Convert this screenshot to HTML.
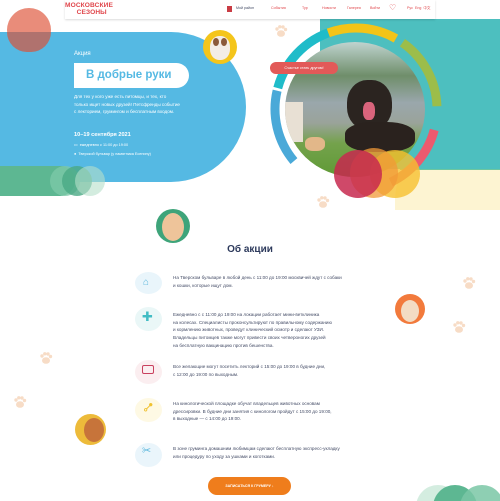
<!DOCTYPE html>
<html><head><meta charset="utf-8"><style>
*{margin:0;padding:0;box-sizing:border-box}
html,body{width:500px;height:501px;overflow:hidden}
body{background:#fff;font-family:"Liberation Sans","DejaVu Sans",sans-serif}
#w{position:relative;width:500px;height:501px;overflow:hidden}
.a{position:absolute}
.c{position:absolute;border-radius:50%}
.t{position:absolute;font-size:4.6px;color:#444c66;line-height:7.7px;white-space:nowrap}
.paw{position:absolute;width:14px;height:14px}
</style></head><body><div id="w">
<svg width="0" height="0" style="position:absolute"><defs><g id="pw" fill="#f7dcc6"><ellipse cx="7" cy="9.5" rx="4" ry="3.3"/><circle cx="3" cy="5" r="1.7"/><circle cx="5.8" cy="2.8" r="1.7"/><circle cx="9" cy="3" r="1.7"/><circle cx="11.5" cy="5.5" r="1.7"/></g></defs></svg>
<div class="a" style="left:395px;top:140px;width:105px;height:70px;background:#fdf4d2;border-radius:60px 0 0 0"></div>
<div class="a" style="left:400px;top:125px;width:100px;height:45px;background:#6cc6a0;border-radius:50px 0 0 0"></div>
<div class="a" style="left:320px;top:19px;width:180px;height:150px;background:#4dbfbf;border-radius:0 0 0 60px"></div>
<div class="a" style="left:0;top:32px;width:246px;height:150px;background:#55b9e3;border-radius:0 75px 75px 0"></div>
<div class="c" style="left:7px;top:8px;width:44px;height:44px;background:#e98c7a"></div>
<div class="a" style="left:7px;top:32px;width:44px;height:20px;background:#b0726e;border-radius:0 0 22px 22px"></div>
<div class="a" style="left:0;top:166px;width:75px;height:30px;background:#5db792;border-radius:0 15px 15px 0"></div>
<div class="c" style="left:50px;top:166px;width:30px;height:30px;background:#7cc8a8;opacity:.8"></div>
<div class="c" style="left:62px;top:166px;width:30px;height:30px;background:#4aa985;opacity:.8"></div>
<div class="c" style="left:75px;top:166px;width:30px;height:30px;background:#b5dfc9;opacity:.6"></div>
<div class="a" style="left:65px;top:0;width:370px;height:19px;background:#fff;box-shadow:0 1px 2px rgba(0,0,0,.15)"></div>
<div class="a" style="left:65px;top:3px;color:#e0474c;font-weight:bold;font-size:6.6px;line-height:6.6px;letter-spacing:.1px">МОСКОВСКИЕ<br>&nbsp;&nbsp;&nbsp;&nbsp;&nbsp;&nbsp;СЕЗОНЫ</div>
<div class="a" style="left:227px;top:6px;width:5px;height:6px;background:#c93c44"></div>
<div class="t" style="left:236px;top:5px;font-size:3.6px">Мой район</div>
<div class="t" style="left:271px;top:5px;font-size:3.6px;color:#e0474c">События</div>
<div class="t" style="left:302px;top:5px;font-size:3.6px;color:#e0474c">Тур</div>
<div class="t" style="left:322px;top:5px;font-size:3.6px;color:#e0474c">Новости</div>
<div class="t" style="left:347px;top:5px;font-size:3.6px;color:#e0474c">Галерея</div>
<div class="t" style="left:370px;top:5px;font-size:3.6px;color:#e0474c">Войти</div>
<div class="a" style="left:389px;top:4px;color:#e0474c;font-size:8px;line-height:8px">♡</div>
<div class="t" style="left:407px;top:5px;font-size:3.6px;color:#e0474c">Рус&nbsp;&nbsp;Eng&nbsp;&nbsp;中文</div>
<div class="a" style="left:74px;top:51px;color:#fff;font-size:6px">Акция</div>
<div class="a" style="left:74px;top:63px;width:115px;height:25px;background:#fff;border-radius:0 13px 13px 0;color:#55b9e3;font-weight:bold;font-size:11.5px;line-height:25px;padding-left:12px">В добрые руки</div>
<div class="t" style="left:74px;top:93px;color:#fff;font-size:4.6px">Для тех у кого уже есть питомцы, и тех, кто<br>только ищет новых друзей! Петсфренды событие<br>с лекторием, грумингом и бесплатным входом.</div>
<div class="a" style="left:74px;top:132px;color:#fff;font-weight:bold;font-size:5.6px">10–19 сентября 2021</div>
<div class="t" style="left:74px;top:142px;color:#fff;font-size:3.8px">▭&nbsp; ежедневно с 11:00 до 19:00</div>
<div class="t" style="left:74px;top:151px;color:#fff;font-size:3.8px">●&nbsp; Тверской бульвар (у памятника Есенину)</div>
<div class="c" style="left:203px;top:30px;width:34px;height:34px;background:#f4c51b"></div>
<div class="c" style="left:210px;top:36px;width:20px;height:24px;background:#f3ede6;border-radius:45%"></div>
<div class="c" style="left:213px;top:38px;width:6px;height:8px;background:#8a5a3a"></div>
<div class="c" style="left:221px;top:38px;width:6px;height:8px;background:#8a5a3a"></div>
<svg class="a" style="left:270px;top:23px" width="172" height="172" viewBox="0 0 172 172">
<g fill="none" stroke-width="9">
<circle cx="86" cy="86" r="81" stroke="#1fbcc9" stroke-dasharray="90 420" transform="rotate(195 86 86)"/>
<circle cx="86" cy="86" r="81" stroke="#f3c418" stroke-dasharray="70 440" transform="rotate(250 86 86)"/>
<circle cx="86" cy="86" r="81" stroke="#9cbd4a" stroke-dasharray="75 440" transform="rotate(305 86 86)"/>
<circle cx="86" cy="86" r="81" stroke="#ec5a6e" stroke-dasharray="70 440" transform="rotate(15 86 86)"/>
<circle cx="86" cy="86" r="81" stroke="#4aa9d8" stroke-dasharray="75 440" transform="rotate(140 86 86)"/>
</g></svg>
<div class="c" style="left:285px;top:42px;width:140px;height:135px;background:linear-gradient(#bfd3cf 0%,#6f8e6a 25%,#9aa7ac 45%,#9aa39a 60%,#74a24c 75%,#5f9a35 100%);overflow:hidden">
<div class="a" style="left:62px;top:38px;width:45px;height:50px;background:#2b2420;border-radius:45%"></div>
<div class="a" style="left:60px;top:80px;width:70px;height:30px;background:#2a221e;border-radius:40%"></div>
<div class="a" style="left:78px;top:60px;width:12px;height:18px;background:#d9647c;border-radius:40%"></div>
<div class="a" style="left:20px;top:95px;width:20px;height:14px;background:#e2b789;border-radius:40%"></div>
<div class="a" style="left:0;top:60px;width:18px;height:40px;background:#e8e0d4"></div>
</div>
<div class="a" style="left:270px;top:62px;width:68px;height:12px;background:#e25a58;border-radius:6px;color:#fff;font-size:3.8px;line-height:12px;text-align:center">Счастье стать другом!</div>
<div class="c" style="left:370px;top:150px;width:50px;height:48px;background:#f6c030;opacity:.8"></div>
<div class="c" style="left:350px;top:148px;width:48px;height:50px;background:#f19a38;opacity:.75"></div>
<div class="c" style="left:334px;top:150px;width:48px;height:48px;background:#c7294f;opacity:.85"></div>
<svg class="paw" style="left:274px;top:24px"><use href="#pw"/></svg>
<svg class="paw" style="left:316px;top:195px"><use href="#pw"/></svg>
<div class="c" style="left:156px;top:209px;width:34px;height:34px;background:#3ea47a"></div>
<div class="c" style="left:162px;top:213px;width:22px;height:28px;background:#eec49a"></div>
<div class="a" style="left:0;top:244px;width:500px;text-align:center;color:#2d3a5c;font-weight:bold;font-size:10px">Об акции</div>
<div class="c" style="left:135px;top:272px;width:27px;height:22px;background:#e9f5fb"></div>
<div class="a" style="left:143px;top:277px;color:#5bb7dc;font-size:10px">⌂</div>
<div class="t" style="left:173px;top:274px">На Тверском бульваре в любой день с 11:00 до 19:00 москвичей ждут с собаки<br>и кошки, которые ищут дом.</div>
<div class="c" style="left:135px;top:307px;width:27px;height:24px;background:#eaf7f7"></div>
<div class="a" style="left:142px;top:309px;color:#41bcc4;font-size:13px">✚</div>
<div class="t" style="left:173px;top:311px">Ежедневно с с 11:00 до 19:00 на локации работает мини-ветклиника<br>на колесах. Специалисты проконсультируют по правильному содержанию<br>и кормлению животных, проведут клинический осмотр и сделают УЗИ.<br>Владельцы питомцев также могут привести своих четвероногих друзей<br>на бесплатную вакцинацию против бешенства.</div>
<div class="c" style="left:135px;top:360px;width:27px;height:24px;background:#fbeef0"></div>
<div class="a" style="left:142px;top:365px;width:12px;height:9px;border:1.3px solid #c9405e;border-radius:2px"></div>
<div class="t" style="left:173px;top:363px">Все желающие могут посетить лекторий с 15:00 до 19:00 в будние дни,<br>с 12:00 до 19:00 по выходным.</div>
<div class="c" style="left:135px;top:398px;width:27px;height:24px;background:#fef9e4"></div>
<div class="a" style="left:142px;top:400px;color:#f0c231;font-size:12px;transform:rotate(-45deg)">⊶</div>
<div class="t" style="left:173px;top:400px">На кинологической площадке обучат владельцев животных основам<br>дрессировки. В будние дни занятия с кинологом пройдут с 15:00 до 19:00,<br>в выходные — с 14:00 до 19:00.</div>
<div class="c" style="left:135px;top:443px;width:27px;height:24px;background:#eaf5fb"></div>
<div class="a" style="left:142px;top:444px;color:#5bb7dc;font-size:11px">✂</div>
<div class="t" style="left:173px;top:445px">В зоне груминга домашним любимцам сделают бесплатную экспресс-укладку<br>или процедуру по уходу за ушками и коготками.</div>
<div class="c" style="left:395px;top:294px;width:30px;height:30px;background:#f27a3c"></div>
<div class="c" style="left:401px;top:300px;width:18px;height:22px;background:#f3dcc3"></div>
<div class="c" style="left:75px;top:414px;width:31px;height:31px;background:#edbb3a"></div>
<div class="c" style="left:84px;top:418px;width:20px;height:24px;background:#c7743a"></div>
<svg class="paw" style="left:462px;top:276px"><use href="#pw"/></svg>
<svg class="paw" style="left:452px;top:320px"><use href="#pw"/></svg>
<svg class="paw" style="left:39px;top:351px"><use href="#pw"/></svg>
<svg class="paw" style="left:13px;top:395px"><use href="#pw"/></svg>
<div class="a" style="left:208px;top:477px;width:83px;height:18px;background:#ef7d1c;border-radius:9px;color:#fff;font-size:3.6px;font-weight:bold;line-height:18px;text-align:center">ЗАПИСАТЬСЯ К ГРУМЕРУ ↓</div>
<svg class="a" style="left:400px;top:485px" width="100" height="16"><circle cx="38" cy="22" r="22" fill="#d4ede0"/><circle cx="55" cy="22" r="22" fill="#5db792"/><circle cx="82" cy="22" r="22" fill="#7ac7a6" opacity=".85"/></svg>
</div></body></html>
